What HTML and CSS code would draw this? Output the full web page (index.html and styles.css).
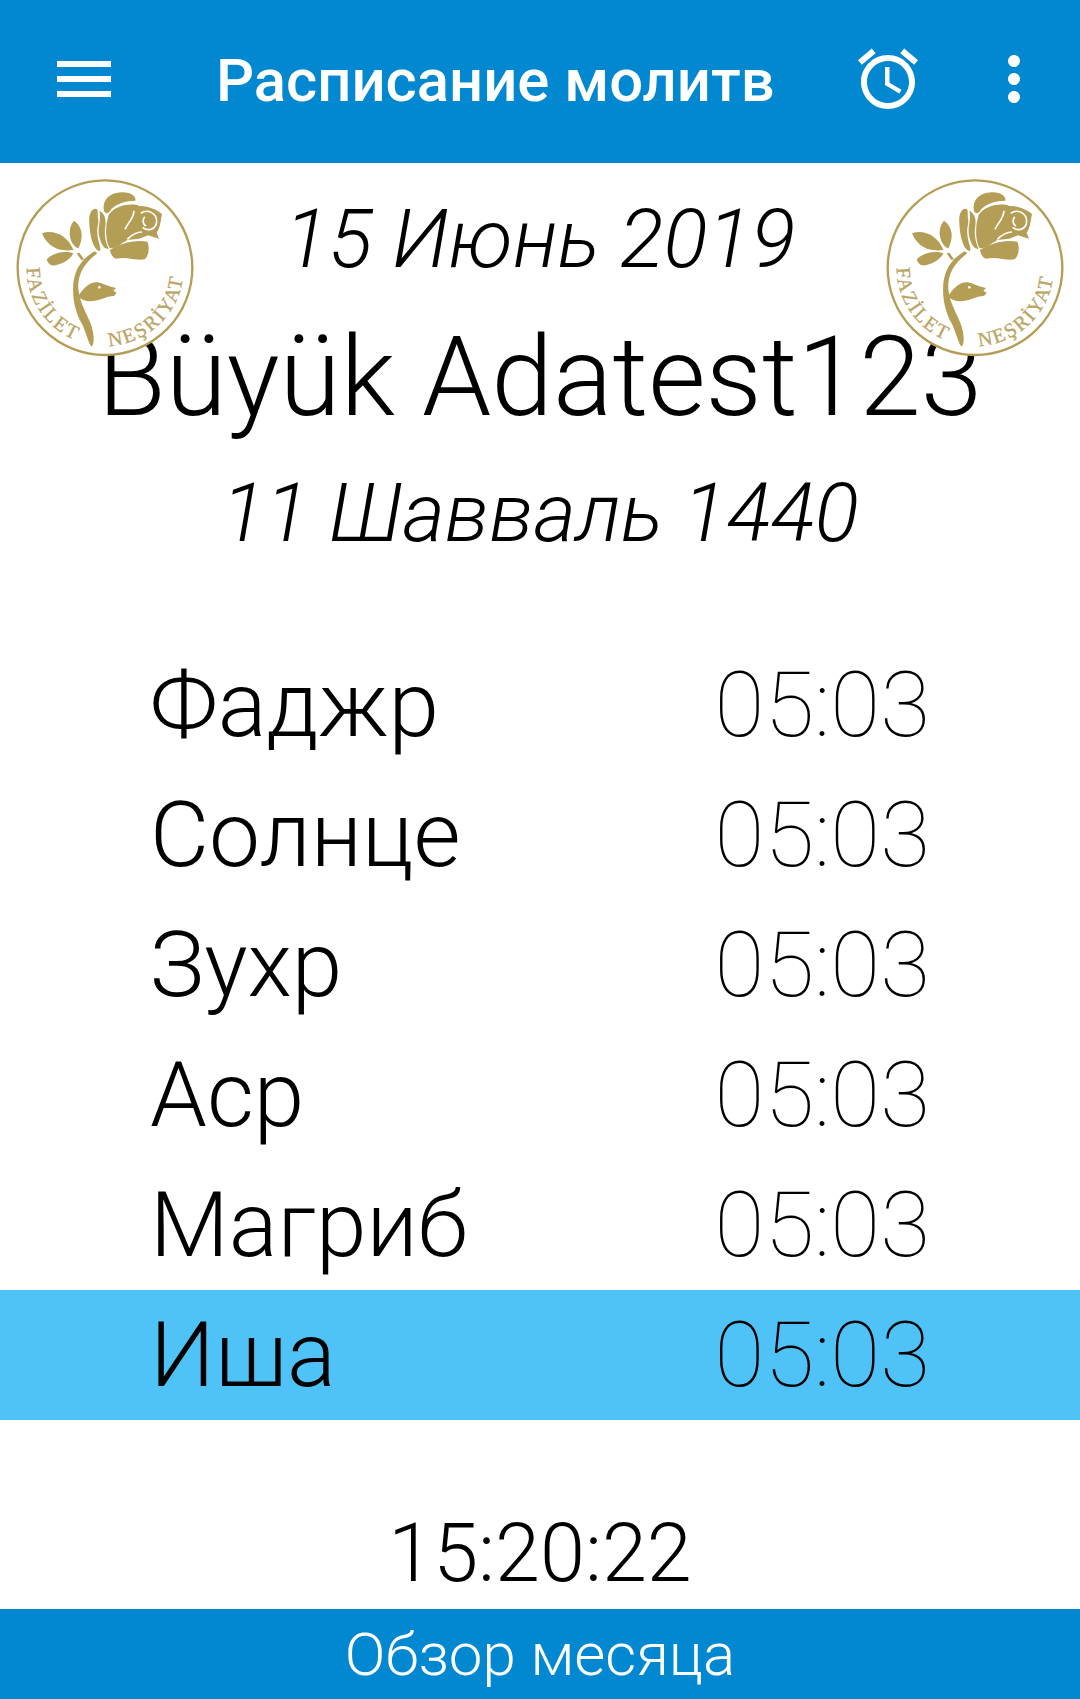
FILE: index.html
```html
<!DOCTYPE html>
<html lang="ru">
<head>
<meta charset="utf-8">
<title>Расписание молитв</title>
<link rel="stylesheet" href="styles.css">
</head>
<body>
<svg class="defs" width="0" height="0" aria-hidden="true">
  <defs>
    <symbol id="logo" viewBox="0 0 570 570">
      <circle cx="285" cy="293" r="262" fill="#fff" stroke="#b49d55" stroke-width="7"/>
      <g fill="#b49d55">
        <path d="M282 122C276 92 298 68 335 67C362 66 380 80 376 92C350 92 312 100 298 126C292 132 284 130 282 122Z"/>
        <path d="M296 134C318 105 365 98 388 108C410 106 440 118 456 132C452 150 452 170 440 188L447 206L414 196L388 206L352 210C332 222 312 238 299 234C290 222 286 190 290 160Z"/>
        <path d="M258 116C242 116 236 135 238 160C240 200 248 235 268 244C278 240 262 215 262 190C260 170 268 160 264 145C262 130 266 118 258 116Z"/>
        <path d="M268 122C285 130 290 150 285 175C282 200 290 225 296 236C280 240 270 215 266 190C264 165 274 150 268 122Z"/>
        <path d="M300 240C326 222 372 208 412 215C420 232 416 258 404 268C380 274 352 258 318 266C308 264 302 252 300 240Z"/>
        <path d="M96 190C130 178 172 195 190 240C150 245 115 235 96 190Z"/>
        <path d="M192 152C212 165 225 195 205 235C180 225 168 180 192 152Z"/>
        <path d="M110 268C130 248 165 240 190 250C180 272 145 288 125 286C118 284 112 276 110 268Z"/>
        <path d="M200 250L208 248L222 268L214 270Z"/>
        <path d="M254 244C222 262 196 290 190 340C186 390 198 430 216 462C226 482 232 510 244 530C254 524 254 490 240 456C222 416 202 380 205 340C209 296 236 270 262 250Z"/>
        <path d="M204 380C216 360 236 336 262 337C282 340 292 350 318 354L310 362L320 368L312 378C288 378 266 394 240 394C226 394 214 388 204 380Z"/>
      </g>
      <g class="logo-cut">
        <path d="M392 130C412 116 440 128 440 155C438 178 414 186 398 172"/>
        <path d="M372 122C372 145 352 160 345 178"/>
        <path d="M386 210C398 204 406 214 416 200"/>
        <path d="M352 208C366 194 380 186 396 186"/>
        <path d="M404 140C396 150 398 162 408 168"/>
      </g>
      <circle cx="268" cy="352" r="4" fill="#fff"/>
      <path id="logo-arc-left" d="M50 293A235 235 0 0 0 205 514" fill="none"/>
      <path id="logo-arc-right" d="M297 528A235 235 0 0 0 520 310" fill="none"/>
      <text class="logo-text"><textPath href="#logo-arc-left">FAZİLET</textPath></text>
      <text class="logo-text"><textPath href="#logo-arc-right">NEŞRİYAT</textPath></text>
    </symbol>
  </defs>
</svg>
<div class="screen">
  <header class="appbar">
    <svg class="icon icon-menu" viewBox="0 0 24 24"><path d="M3 18h18v-2H3v2zm0-5h18v-2H3v2zm0-7v2h18V6H3z"/></svg>
    <h1 class="appbar-title">Расписание молитв</h1>
    <svg class="icon icon-alarm" viewBox="0 0 24 24"><path d="M22 5.72l-4.6-3.86-1.29 1.53 4.6 3.86L22 5.72zM7.88 3.39L6.6 1.86 2 5.71l1.29 1.53 4.59-3.85zM12.5 8H11v6l4.75 2.85.75-1.23-4-2.37V8zM12 4c-4.97 0-9 4.03-9 9s4.03 9 9 9 9-4.03 9-9-4.03-9-9-9zm0 16c-3.87 0-7-3.13-7-7s3.13-7 7-7 7 3.13 7 7-3.13 7-7 7z"/></svg>
    <svg class="icon icon-more" viewBox="0 0 24 24"><path d="M12 8c1.1 0 2-.9 2-2s-.9-2-2-2-2 .9-2 2 .9 2 2 2zm0 2c-1.1 0-2 .9-2 2s.9 2 2 2 2-.9 2-2-.9-2-2-2zm0 6c-1.1 0-2 .9-2 2s.9 2 2 2 2-.9 2-2-.9-2-2-2z"/></svg>
  </header>
  <main class="content">
    <section class="heading">
      <p class="date">15 Июнь 2019</p>
      <p class="city">Büyük Adatest123</p>
      <p class="date date-hijri">11 Шавваль 1440</p>
      <svg class="logo logo-left"><use href="#logo"/></svg>
      <svg class="logo logo-right"><use href="#logo"/></svg>
    </section>
    <ul class="times">
      <li class="time-row"><span class="time-name">Фаджр</span><span class="time-value">05:03</span></li>
      <li class="time-row"><span class="time-name">Солнце</span><span class="time-value">05:03</span></li>
      <li class="time-row"><span class="time-name">Зухр</span><span class="time-value">05:03</span></li>
      <li class="time-row"><span class="time-name">Аср</span><span class="time-value">05:03</span></li>
      <li class="time-row"><span class="time-name">Магриб</span><span class="time-value">05:03</span></li>
      <li class="time-row time-row-active"><span class="time-name">Иша</span><span class="time-value">05:03</span></li>
    </ul>
    <p class="clock">15:20:22</p>
  </main>
  <footer class="monthbar">Обзор месяца</footer>
</div>
</body>
</html>
```
FILE: styles.css
```css
* { box-sizing: border-box; }
html, body { margin: 0; padding: 0; }
body { background: #fff; color: #000; font-family: Roboto, "Noto Sans", sans-serif; }
p, ul, h1 { margin: 0; padding: 0; }
.defs { position: absolute; }
.screen { width: 1080px; height: 1699px; display: flex; flex-direction: column; overflow: hidden; }

.appbar { height: 163px; flex: none; background: #0288d1; display: flex; align-items: flex-start; padding: 43px 0 0 48px; }
.icon { width: 72px; height: 72px; fill: #fff; flex: none; }
.appbar-title { font-size: 59.8px; font-weight: 500; line-height: 72px; color: #fff; margin: 2px 0 0 96px; width: 636px; white-space: nowrap; }
.icon-more { margin-left: 54px; }

.content { flex: 1; display: flex; flex-direction: column; }
.heading { position: relative; height: 477px; padding-top: 28px; text-align: center; }
.date { font-size: 81.7px; font-weight: 300; font-style: italic; line-height: 96px; }
.city { font-size: 111px; font-weight: 300; line-height: 130px; margin-top: 25px; }
.date-hijri { margin-top: 23px; }
.logo { position: absolute; top: 7px; width: 190px; height: 190px; }
.logo-left { left: 10px; }
.logo-right { left: 880px; }
.logo-text { font-family: "Liberation Serif", serif; font-size: 60px; fill: #b9a565; stroke: #b9a565; stroke-width: 1; letter-spacing: 6px; }
.logo-cut { fill: none; stroke: #fff; stroke-width: 5; }

.times { list-style: none; }
.time-row { height: 130px; display: flex; justify-content: space-between; align-items: center; padding: 0 150px 1px; }
.time-row-active { background: #4fc3f7; }
.time-name { font-size: 91px; font-weight: 300; }
.time-value { font-size: 91px; font-weight: 100; }

.clock { text-align: center; font-size: 81px; font-weight: 300; line-height: 96px; margin-top: 86px; }
.monthbar { height: 90px; flex: none; margin-top: auto; padding-top: 1px; background: #0288d1; color: #fff; text-align: center; font-size: 60px; font-weight: 300; line-height: 90px; }
```
